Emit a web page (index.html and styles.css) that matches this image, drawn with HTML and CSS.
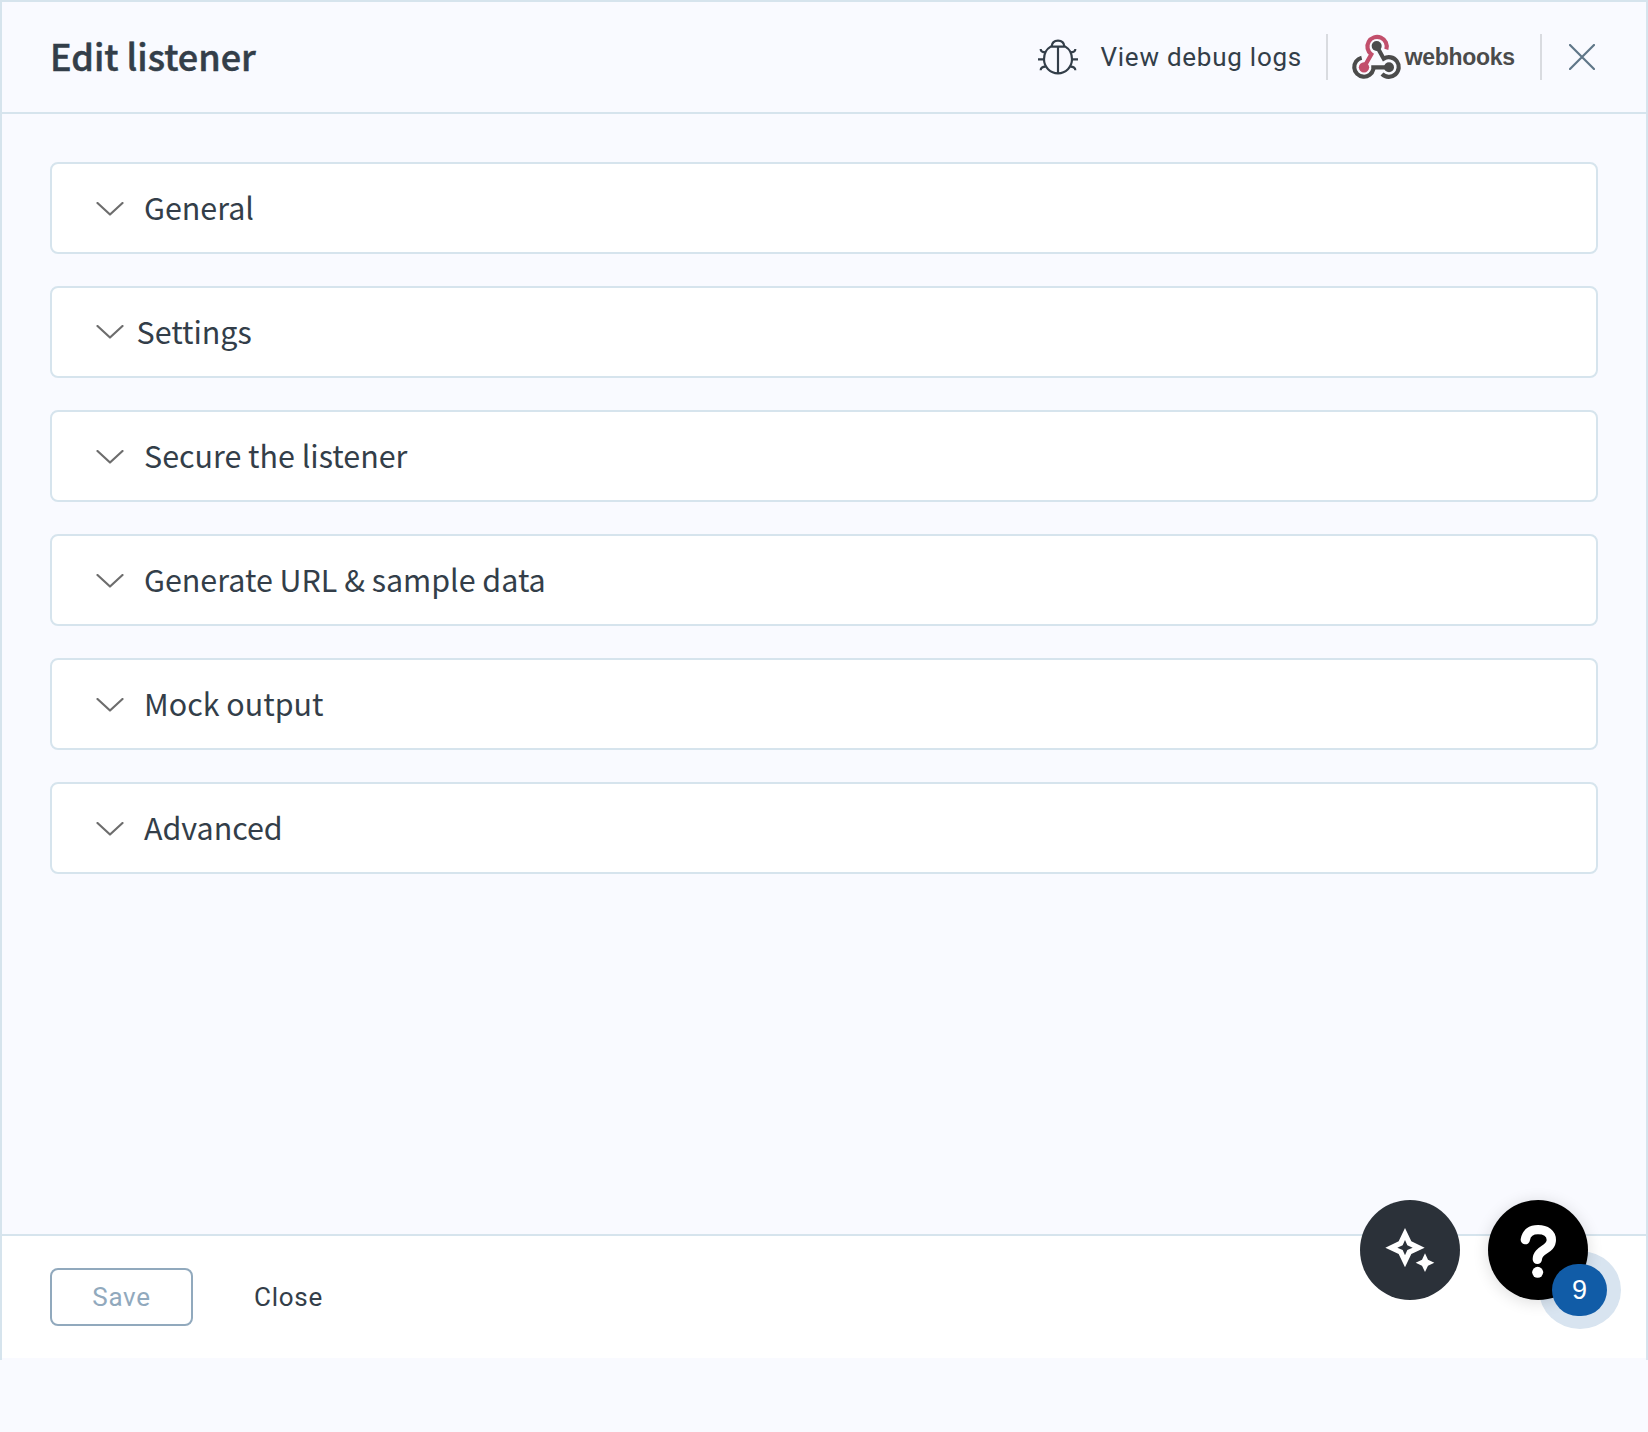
FILE: index.html
```html
<!DOCTYPE html>
<html lang="en">
<head>
<meta charset="utf-8">
<title>Edit listener</title>
<link rel="stylesheet" href="styles.css">
</head>
<body>
<div class="drawer">
  <header class="header">
    <h1 class="title">Edit listener</h1>
    <div class="actions">
      <button class="debug" type="button">
        <svg class="bug" viewBox="0 0 120 105">
          <path d="M18 58a42 42 0 0 0 84 0c0-17-8-31-20-38H38C26 27 18 41 18 58zM60 20v82M41 19c1-11 9-17 19-17s18 6 19 17"/>
          <path d="M0 58h18M102 58h18M8 27c0 8 5 10 15 10M112 27c0 8-5 10-15 10M8 91c0-8 5-11 15-11M112 91c0-8-5-11-15-11"/>
        </svg>
        <span>View debug logs</span>
      </button>
      <span class="divider"></span>
      <svg class="logo" viewBox="96 100 492 138">
        <g fill="none" stroke="#4b4b4b" stroke-width="12.500">
          <path d="M125 171A29 29 0 1 0 160 206V200H207"/>
          <path d="M170 136L191 174A29.500 29.500 0 1 1 186 220"/>
          <path stroke="#c24f6c" d="M199 146A29 29 0 1 0 154 161L132 200"/>
        </g>
        <circle cx="132" cy="200" r="15.500" fill="#c24f6c"/>
        <circle cx="170" cy="136" r="15" fill="#4b4b4b"/>
        <circle cx="207" cy="200" r="15" fill="#4b4b4b"/>
        <text class="logo-text" x="254" y="192" textLength="331" lengthAdjust="spacing">webhooks</text>
      </svg>
      <span class="divider"></span>
      <svg class="x" viewBox="0 0 26 26"><path d="M1 1l24 24M25 1L1 25"/></svg>
    </div>
  </header>
  <main class="body">
    <section class="card"><svg class="chev" viewBox="0 0 28 14"><path d="M1.500 1L14 12.500 26.500 1"/></svg><span>General</span></section>
    <section class="card card-tight"><svg class="chev" viewBox="0 0 28 14"><path d="M1.500 1L14 12.500 26.500 1"/></svg><span>Settings</span></section>
    <section class="card"><svg class="chev" viewBox="0 0 28 14"><path d="M1.500 1L14 12.500 26.500 1"/></svg><span>Secure the listener</span></section>
    <section class="card"><svg class="chev" viewBox="0 0 28 14"><path d="M1.500 1L14 12.500 26.500 1"/></svg><span>Generate URL &amp; sample data</span></section>
    <section class="card"><svg class="chev" viewBox="0 0 28 14"><path d="M1.500 1L14 12.500 26.500 1"/></svg><span>Mock output</span></section>
    <section class="card"><svg class="chev" viewBox="0 0 28 14"><path d="M1.500 1L14 12.500 26.500 1"/></svg><span>Advanced</span></section>
  </main>
  <footer class="footer">
    <button class="btn save" type="button">Save</button>
    <button class="btn close" type="button">Close</button>
  </footer>
</div>
<div class="fabs">
  <div class="fab ai">
    <svg viewBox="0 0 300 300">
      <path fill="#fff" fill-rule="evenodd" d="M135 84L154 124 194 143 154 162 135 202 116 162 76 143 116 124zM135 120L128 136 112 143 128 150 135 166 142 150 158 143 142 136z"/>
      <path fill="#fff" d="M195 160L204 179 223 188 204 197 195 216 186 197 167 188 186 179z"/>
    </svg>
  </div>
  <div class="help">
    <span class="halo"></span>
    <div class="fab dark">
      <svg viewBox="0 0 300 300">
        <path fill="none" stroke="#fff" stroke-width="28" stroke-linecap="round" stroke-linejoin="round" d="M112 119C115 98 130 89 150 89C174 89 190 101 190 120C190 150 148 148 148 178"/>
        <circle cx="149" cy="217" r="16.500" fill="#fff"/>
      </svg>
    </div>
    <span class="badge">9</span>
  </div>
</div>
</body>
</html>
```
FILE: styles.css
```css
* { box-sizing: border-box; }
body { margin: 0; background: #f9faff; color: #333e49; font-family: "Noto Sans CJK SC", sans-serif; }
button { margin: 0; padding: 0; border: 0; background: none; color: inherit; font: 26px Roboto, sans-serif; letter-spacing: .75px; }
svg { display: block; flex: none; }
.drawer { display: flex; flex-direction: column; height: 1360px; border: 2px solid #d6e4ed; border-bottom: 0; padding-bottom: 2px; }
.header { display: flex; justify-content: space-between; align-items: center; height: 112px; padding: 0 51px 0 48px; border-bottom: 2px solid #d6e4ed; }
.title { margin: 0; padding-bottom: 4px; font-size: 36px; font-weight: 500; line-height: 52px; -webkit-text-stroke: .5px #333e49; }
.actions { display: flex; align-items: center; }
.debug { display: flex; align-items: center; gap: 22px; margin-right: 24px; }
.bug { width: 40px; height: 35px; fill: none; stroke: #333e49; stroke-width: 6.5; overflow: visible; }
.divider { width: 2px; height: 46px; background: #d9dbe0; }
.logo { width: 164px; height: 46px; margin: 0 24px; overflow: visible; }
.logo-text { font: bold 69px "Liberation Sans", sans-serif; fill: #4b4b4b; }
.x { width: 26px; height: 26px; margin-left: 27px; fill: none; stroke: #5f7688; stroke-width: 2.2; stroke-linecap: round; }
.body { flex: 1; display: flex; flex-direction: column; gap: 32px; padding: 48px; }
.card { display: flex; align-items: center; gap: 20px; height: 92px; padding: 0 44px 2px; border: 2px solid #d6e4ed; border-radius: 8px; background: #fff; font-size: 30.43px; line-height: 44px; }
.card-tight { gap: 12.5px; }
.chev { width: 28px; height: 14px; margin-top: 4px; fill: none; stroke: #6d6d6d; stroke-width: 2.2; stroke-linecap: round; stroke-linejoin: round; }
.card-tight .chev { margin-top: 2px; }
.footer { display: flex; align-items: flex-start; gap: 61px; height: 124px; padding: 32px 48px; border-top: 2px solid #d6e4ed; background: #fff; }
.btn { height: 58px; }
.save { width: 143px; border: 2px solid #91a9bd; border-radius: 8px; color: #91a9bd; }
.fabs { position: absolute; left: 1360px; top: 1200px; display: flex; gap: 28px; }
.fab { width: 100px; height: 100px; border-radius: 50%; background: #2b3139; }
.help { position: relative; }
.dark { position: relative; background: #000; box-shadow: 0 2px 16px rgba(0, 0, 0, .14); }
.halo { position: absolute; left: 50.500px; top: 51px; width: 82px; height: 78px; border-radius: 50%; background: #d8e4f0; }
.badge { position: absolute; left: 64px; top: 64px; width: 55px; height: 52px; border-radius: 26px; background: #115ca7; color: #fff; font: 27px/52px "Liberation Sans", sans-serif; text-align: center; }
```
